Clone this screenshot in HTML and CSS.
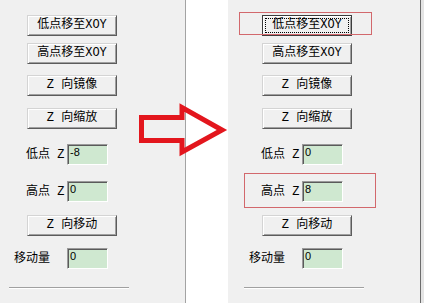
FILE: index.html
```html
<!DOCTYPE html>
<html>
<head>
  <meta charset="utf-8">
  <title>Z 向操作</title>
  <link rel="stylesheet" href="styles.css">
</head>
<body>

  <!-- before -->
  <div class="panel left">
    <div class="btn b1">低点移至XOY</div>
    <div class="btn b2">高点移至XOY</div>
    <div class="btn b3">Z 向镜像</div>
    <div class="btn b4">Z 向缩放</div>
    <div class="row r1"><span class="lbl">低点 Z</span><span class="field">-8</span></div>
    <div class="row r2"><span class="lbl">高点 Z</span><span class="field">0</span></div>
    <div class="btn b5">Z 向移动</div>
    <div class="row r3"><span class="lbl wide">移动量</span><span class="field">0</span></div>
    <div class="sep"></div>
  </div>

  <div class="blank"></div>

  <!-- after -->
  <div class="panel right">
    <div class="btn b1 focus">低点移至XOY</div>
    <div class="btn b2">高点移至XOY</div>
    <div class="btn b3">Z 向镜像</div>
    <div class="btn b4">Z 向缩放</div>
    <div class="row r1"><span class="lbl">低点 Z</span><span class="field">0</span></div>
    <div class="row r2"><span class="lbl">高点 Z</span><span class="field">8</span></div>
    <div class="btn b5">Z 向移动</div>
    <div class="row r3"><span class="lbl wide">移动量</span><span class="field">0</span></div>
    <div class="sep"></div>

    <div class="mark m1"></div>
    <div class="mark m2"></div>
  </div>

  <div class="edge"></div>

  <svg class="arrow" width="95" height="60" viewBox="135 100 95 60">
    <polygon points="141.5,117.5 182,117.5 182,107.5 222,130 182,152 182,140.5 141.5,140.5"
             fill="none" stroke="#e3161d" stroke-width="5" stroke-linejoin="miter"/>
  </svg>

</body>
</html>
```

FILE: styles.css
```css
body {
  margin: 0;
  width: 424px;
  height: 303px;
  overflow: hidden;
  display: flex;
  background: #ffffff;
  font-family: "Liberation Mono", "Noto Sans CJK SC", monospace;
  font-size: 12px;
  color: #000;
  position: relative;
}

.panel {
  flex: none;
  width: 192px;
  height: 303px;
  background: #f0f0f0;
  display: flex;
  flex-direction: column;
  position: relative;
}
.left {
  margin-left: -7px;
  border-right: 1px solid #a3a3a3;
}
.right {
  border-right: 1px solid #6c6c6c;
}

.blank {
  flex: none;
  width: 42px;
  background: #ffffff;
}
.edge {
  flex: 1;
  background: #e4e4e4;
}

/* classic 3d buttons */
.btn {
  box-sizing: border-box;
  width: 90px;
  height: 21px;
  margin-left: 34px;
  line-height: 19px;
  text-align: center;
  white-space: pre;
  background: #f0f0f0;
  border: 1px solid;
  border-color: #d4d4d4 #5c5c5c #5c5c5c #d4d4d4;
  box-shadow: inset 1px 1px 0 #ffffff, inset -1px -1px 0 #a0a0a0;
}
.btn.focus {
  border-color: #3c3c3c;
  outline: 1px dotted #000;
  outline-offset: -4px;
}
.b1 { margin-top: 15px; }
.b2 { margin-top: 7px; }
.b3 { margin-top: 11px; }
.b4 { margin-top: 12px; }
.b5 { margin-top: 13px; }

.row {
  display: flex;
  align-items: center;
  height: 21px;
}
.r1 { margin-top: 15px; }
.r2 { margin-top: 16px; }
.r3 { margin-top: 12px; }

.lbl {
  margin-left: 33px;
  width: 41px;
  white-space: pre;
  line-height: 14px;
}
.lbl.wide {
  margin-left: 21px;
  width: 53px;
}

.field {
  box-sizing: border-box;
  width: 41px;
  height: 21px;
  padding: 1px 2px 0;
  font-family: "Liberation Sans", sans-serif;
  font-size: 11px;
  line-height: 12px;
  background: #cfe8d0;
  border: 1px solid;
  border-color: #9a9a9a #ffffff #ffffff #9a9a9a;
  box-shadow: inset 1px 1px 0 #5a5a5a;
}

.sep {
  margin: 18px 0 0 16px;
  width: 120px;
  height: 1px;
  background: #a0a0a0;
  border-bottom: 1px solid #ffffff;
}

/* red annotation boxes */
.mark {
  position: absolute;
  border: 1px solid #d2686c;
}
.m1 {
  left: 11px;
  top: 12px;
  width: 131px;
  height: 21px;
}
.m2 {
  left: 16px;
  top: 173px;
  width: 130px;
  height: 33px;
}

.arrow {
  position: absolute;
  left: 135px;
  top: 100px;
}
```
